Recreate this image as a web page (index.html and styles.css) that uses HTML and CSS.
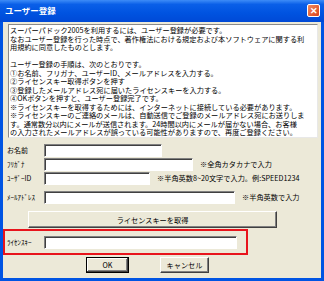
FILE: index.html
```html
<!DOCTYPE html>
<html lang="ja">
<head>
  <meta charset="UTF-8">
  <title>ユーザー登録</title>
  <link rel="stylesheet" href="styles.css">
</head>
<body>
  <div class="window">
    <div class="titlebar">
      <span class="title">ユーザー登録</span>
      <span class="close">&#x2715;</span>
    </div>
    <div class="content">
      <!-- notice text -->
      <div class="notice">
        <div>スーパーパドック2005を利用するには、ユーザー登録が必要です。</div>
        <div>なおユーザー登録を行った時点で、著作権法における規定および本ソフトウェアに関する利</div>
        <div>用規約に同意したものとします。</div>
        <div>&nbsp;</div>
        <div>ユーザー登録の手順は、次のとおりです。</div>
        <div>①お名前、フリガナ、ユーザーID、メールアドレスを入力する。</div>
        <div>②ライセンスキー取得ボタンを押す</div>
        <div>③登録したメールアドレス宛に届いたライセンスキーを入力する。</div>
        <div>④OKボタンを押すと、ユーザー登録完了です。</div>
        <div>※ライセンスキーを取得するためには、インターネットに接続している必要があります。</div>
        <div>※ライセンスキーのご連絡のメールは、自動送信でご登録のメールアドレス宛にお送りしま</div>
        <div>す。通常数分以内にメールが送信されます。24時間以内にメールが届かない場合、お客様</div>
        <div>の入力されたメールアドレスが誤っている可能性がありますので、再度ご登録ください。</div>
      </div>

      <!-- form rows -->
      <div class="row row-name">
        <label>お名前</label>
        <span class="field w-name"></span>
      </div>
      <div class="row">
        <label>ﾌﾘｶﾞﾅ</label>
        <span class="field w-kana"></span>
        <span class="hint">※全角カタカナで入力</span>
      </div>
      <div class="row">
        <label>ﾕｰｻﾞｰID</label>
        <span class="field w-id"></span>
        <span class="hint">※半角英数8~20文字で入力。例:SPEED1234</span>
      </div>
      <div class="row row-mail">
        <label>ﾒｰﾙｱﾄﾞﾚｽ</label>
        <span class="field w-mail"></span>
        <span class="hint">※半角英数で入力</span>
      </div>

      <button class="btn btn-key">ライセンスキーを取得</button>

      <div class="row license">
        <label>ﾗｲｾﾝｽｷｰ</label>
        <span class="field w-key"></span>
      </div>

      <div class="actions">
        <button class="btn btn-ok">OK</button>
        <button class="btn btn-cancel">キャンセル</button>
      </div>
    </div>
  </div>
</body>
</html>
```

FILE: styles.css
```css
body {
  margin: 0;
  background: #ffffff;
  font-family: "Noto Sans CJK JP", sans-serif;
}

.window {
  width: 324px;
  height: 281px;
  display: flex;
  flex-direction: column;
}

.titlebar {
  height: 22px;
  flex: none;
  display: flex;
  align-items: center;
  justify-content: space-between;
  padding: 0 4px 0 5px;
  background: linear-gradient(#3d8cf7 0%, #0a5fe8 20%, #0053e0 60%, #0049d6 100%);
  box-sizing: border-box;
}

.title {
  color: #ffffff;
  font-size: 8.5px;
  font-weight: bold;
  line-height: 1;
  margin-top: -1px;
}

.close {
  width: 13px;
  height: 13px;
  box-sizing: border-box;
  border: 1px solid #ffffff;
  border-radius: 2px;
  background: linear-gradient(135deg, #f08a5e, #d8431c);
  color: #ffffff;
  font-size: 9px;
  font-weight: bold;
  line-height: 11px;
  text-align: center;
  margin-top: -2px;
}

.content {
  flex: 1;
  background: #ece9d8;
  border: 3px solid #0054e3;
  border-top: none;
  padding: 0 0 0 4px;
  font-size: 7.2px;
  color: #000000;
}

.notice {
  width: 310px;
  height: 114px;
  margin: 2px 0 0 1px;
  box-sizing: border-box;
  background: #ffffff;
  border: 1px solid;
  border-color: #8a8a8a #e8e8e8 #e8e8e8 #8a8a8a;
  padding: 1px 1px;
  font-size: 7.2px;
  line-height: 8.5px;
  white-space: nowrap;
  overflow: hidden;
}

.row {
  display: flex;
  align-items: center;
  height: 14px;
  margin-top: 0;
}

.row-name {
  margin-top: 5px;
}

.row-mail {
  margin-top: 5px;
}

.row label {
  width: 37px;
  flex: none;
  font-size: 7px;
  white-space: nowrap;
}

.field {
  height: 13px;
  box-sizing: border-box;
  background: #ffffff;
  border: 1px solid;
  border-color: #808080 #ffffff #ffffff #808080;
  box-shadow: inset 1px 1px #404040;
}

.w-name { width: 118px; }
.w-kana { width: 149px; }
.w-id { width: 106px; }
.w-mail { width: 191px; }
.w-key { width: 193px; }

.hint {
  margin-left: 7px;
  white-space: nowrap;
}

.btn {
  font-family: "Noto Sans CJK JP", sans-serif;
  font-size: 7.2px;
  background: #ece9d8;
  color: #000000;
  border: 1px solid;
  border-color: #ffffff #404040 #404040 #ffffff;
  box-shadow: inset -1px -1px #808080;
  padding: 0;
  box-sizing: border-box;
}

.btn-key {
  display: block;
  width: 249px;
  height: 17px;
  margin: 7px 0 0 21px;
}

.license {
  width: 245px;
  height: 26px;
  box-sizing: border-box;
  margin: 1px 0 0 -4px;
  padding-left: 2px;
  border: 2px solid #e8141c;
}

.license label {
  width: 37px;
}

.actions {
  display: flex;
  margin-top: 2px;
  padding-left: 79px;
  gap: 31px;
}

.btn-ok {
  width: 43px;
  height: 16px;
  border: 1px solid #000000;
  box-shadow: inset -1px -1px #404040, inset 1px 1px #ffffff, inset -2px -2px #808080;
}

.btn-cancel {
  width: 49px;
  height: 16px;
}
```
